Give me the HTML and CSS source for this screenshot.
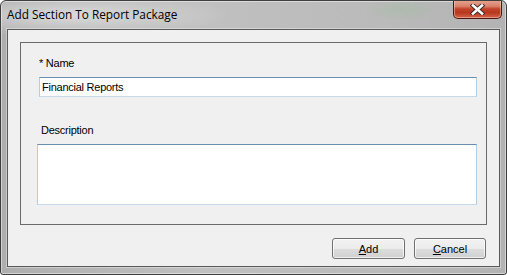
FILE: index.html
```html
<!DOCTYPE html>
<html lang="en">
<head>
  <meta charset="UTF-8">
  <title>Add Section To Report Package</title>
  <link rel="stylesheet" href="styles.css">
</head>
<body>
  <div class="window">
    <div class="titlebar">
      <span class="title">Add Section To Report Package</span>
      <button class="close" title="Close">
        <svg width="17" height="11" viewBox="0 0 17 11">
          <path d="M4 1.5 L13 9.5 M13 1.5 L4 9.5" stroke="#3a2a28" stroke-width="4.4" stroke-linecap="square"/>
          <path d="M4 1.5 L13 9.5 M13 1.5 L4 9.5" stroke="#ffffff" stroke-width="2.6" stroke-linecap="square"/>
        </svg>
      </button>
    </div>

    <div class="client">
      <div class="group">
        <label class="field-label" for="name">* Name</label>
        <input class="textbox name-box" id="name" type="text" value="Financial Reports">
        <label class="field-label desc-label" for="desc">Description</label>
        <textarea class="textbox desc-box" id="desc"></textarea>
      </div>
      <div class="actions">
        <button class="btn btn-add"><u>A</u>dd</button>
        <button class="btn btn-cancel"><u>C</u>ancel</button>
      </div>
    </div>
  </div>
</body>
</html>
```

FILE: styles.css
```css
body {
  margin: 0;
  background: #ffffff;
  font-family: "Liberation Sans", Arial, sans-serif;
}
.window {
  box-sizing: border-box;
  width: 507px;
  height: 275px;
  display: flex;
  flex-direction: column;
  border: 1px solid #3f3f3f;
  border-radius: 6px 6px 3px 3px;
  background:
    radial-gradient(ellipse 160px 22px at 70px 14px, rgba(235,235,235,0.7), rgba(235,235,235,0) 100%),
    radial-gradient(ellipse 40px 12px at 400px 8px, rgba(150,190,150,0.3), rgba(150,190,150,0) 100%),
    linear-gradient(to right, #aeaeae 0%, #c0c0c0 40%, #bababa 75%, #b3b3b3 100%);
  box-shadow: inset 0 0 0 1px rgba(255,255,255,0.45);
  overflow: hidden;
}
.titlebar {
  height: 28px;
  display: flex;
  align-items: flex-start;
  justify-content: space-between;
  flex-shrink: 0;
}
.title {
  font-family: "Open Sans", "Noto Sans", sans-serif;
  font-size: 11.8px;
  color: #000000;
  padding: 5px 0 0 6px;
  line-height: 16px;
}
.close {
  width: 49px;
  height: 19px;
  margin: -1px 4px 0 0;
  padding: 0;
  border: 1px solid #4a1a12;
  border-top: 0;
  border-radius: 0 0 5px 5px;
  background: linear-gradient(to bottom, #e6a795 0%, #d98068 35%, #c2412a 50%, #b8391f 70%, #d3644a 100%);
  box-shadow: inset 0 0 0 1px rgba(255,220,210,0.45);
  display: flex;
  align-items: center;
  justify-content: center;
}
.close svg {
  display: block;
  margin-top: 1px;
}
.client {
  flex: 1;
  margin: 0 6px 7px 6px;
  border: 1px solid #5a5a5a;
  background: #f0f0f0;
  display: flex;
  flex-direction: column;
  box-shadow: 0 0 0 1px rgba(255,255,255,0.35);
}
.group {
  box-sizing: border-box;
  height: 183px;
  margin: 12px 12px 0 12px;
  border: 1px solid #6a6a6a;
  padding: 14px 9px 0 18px;
  display: flex;
  flex-direction: column;
  align-items: flex-start;
}
.field-label {
  font-size: 11px;
  line-height: 13px;
  letter-spacing: -0.25px;
  color: #000000;
}
.desc-label {
  margin: 27px 0 0 2px;
}
.textbox {
  box-sizing: border-box;
  margin: 7px 0 0 0;
  background: #ffffff;
  border: 1px solid #c5d9e8;
  border-top-color: #6a8eb0;
  border-left-color: #b6cde0;
  border-right-color: #b6cde0;
  font-family: "Liberation Sans", Arial, sans-serif;
  font-size: 11px;
  letter-spacing: -0.25px;
  color: #000000;
  outline: none;
}
.name-box {
  width: 438px;
  height: 20px;
  padding: 0 2px;
  line-height: 18px;
}
.desc-box {
  width: 440px;
  height: 61px;
  margin-left: -2px;
  resize: none;
  padding: 2px;
}
.actions {
  display: flex;
  justify-content: flex-end;
  gap: 9px;
  margin: 13px 13px 0 0;
}
.btn {
  box-sizing: border-box;
  height: 21px;
  padding: 0;
  border: 1px solid #707070;
  border-radius: 3px;
  background: linear-gradient(to bottom, #f2f2f2 0%, #ebebeb 50%, #dddddd 51%, #cfcfcf 100%);
  box-shadow: inset 0 0 0 1px rgba(255,255,255,0.7);
  font-family: "Liberation Sans", Arial, sans-serif;
  font-size: 11px;
  color: #000000;
  line-height: 18px;
}
.btn-add {
  width: 73px;
}
.btn-cancel {
  width: 72px;
}
```
